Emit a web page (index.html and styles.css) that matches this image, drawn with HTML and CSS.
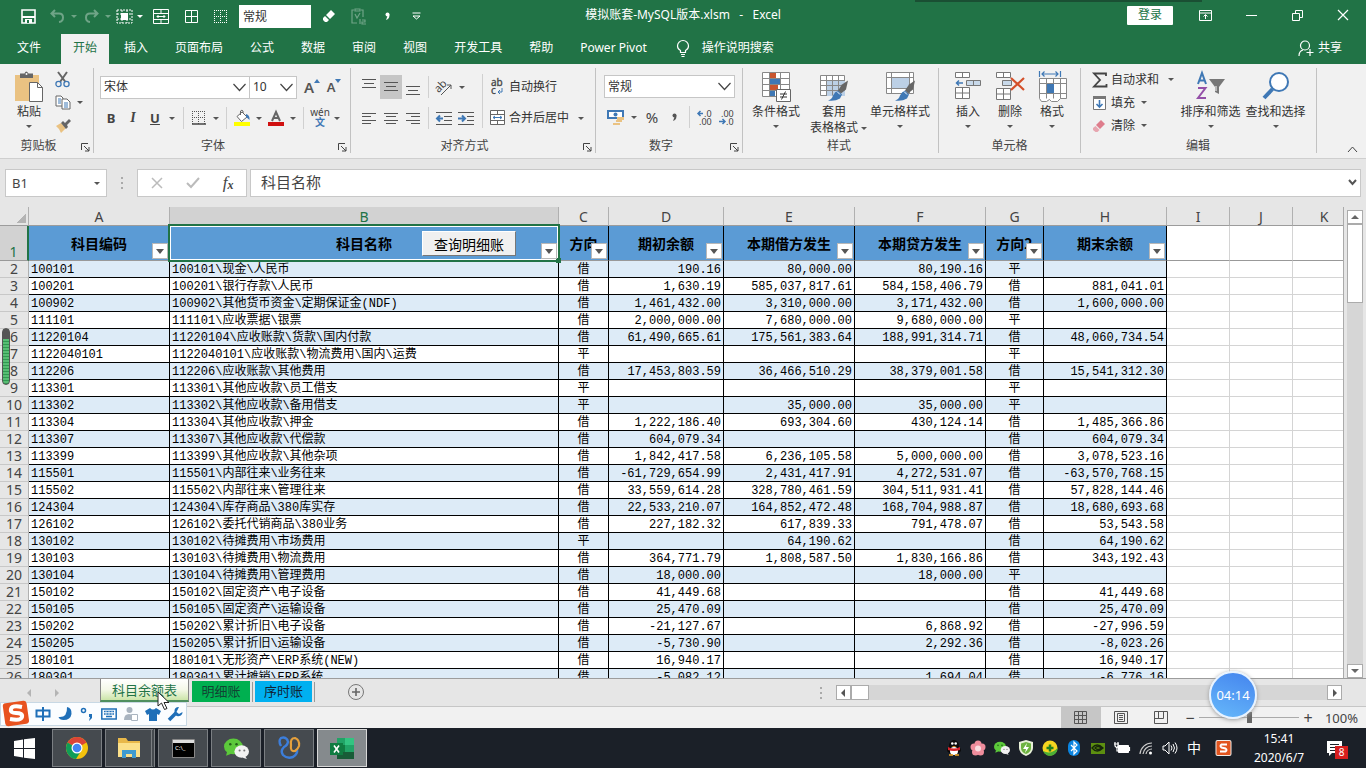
FILE: index.html
```html
<!DOCTYPE html>
<html lang="zh-CN">
<head>
<meta charset="utf-8">
<title>模拟账套-MySQL版本.xlsm - Excel</title>
<link rel="stylesheet" href="styles.css">
</head>
<body>
<svg class="defs" aria-hidden="true">
<symbol id="launch" viewBox="0 0 9 9"><path d="M.5 7V.5H7M3 3l5 5M8 4v4H4" fill="none" stroke="#444"/></symbol>
<symbol id="chev" viewBox="0 0 15 9"><path d="M1.500 1l6 6.500 6-6.500" fill="none" stroke="#444" stroke-width="1.200"/></symbol>
<symbol id="brush" viewBox="0 0 22 22"><path d="M21 1l-2 9-5 4-3-3 4-6z" fill="#666"/><path d="M11 11l4 4-2 4q-5 3-12 2 4-1 5-5 2-4 5-5z" fill="#3f78b5"/><path d="M10 12l3 3" stroke="#fff" stroke-width="1"/></symbol>
<symbol id="wechat" viewBox="0 0 24 20"><ellipse cx="9" cy="8" rx="9" ry="7.500" fill="#5cc93b"/><path d="M3 13l-1 4 5-2z" fill="#5cc93b"/><circle cx="6" cy="6" r="1.200" fill="#24611a"/><circle cx="12" cy="6" r="1.200" fill="#24611a"/><ellipse cx="17" cy="13" rx="7" ry="6" fill="#f2f2f2"/><path d="M20 17l2 3-4-1z" fill="#f2f2f2"/><circle cx="15" cy="12" r="1" fill="#777"/><circle cx="19.500" cy="12" r="1" fill="#777"/></symbol>
</svg>
<div class="app">
<header class="title">
  <div class="qat">
    <button class="q q-save" aria-label="保存"><svg width="15" height="15" viewBox="0 0 15 15"><path d="M1 1h13v13H1z" fill="none" stroke="#fff" stroke-width="1.600"/><path d="M1 7h13v2H1zM4 10h7v4H4z" fill="#fff"/><path d="M6 11h2v3H6z" fill="#217346"/></svg></button>
    <button class="q q-undo dim" aria-label="撤消"><svg width="15" height="14" viewBox="0 0 15 14"><path d="M5 1L1.500 4.500 5 8M2 4.500h7q4 0 4 4t-4 4.500" fill="none" stroke="#fff" stroke-width="2"/></svg></button><i class="car w10 dim"></i>
    <button class="q q-undo dim" aria-label="恢复"><svg width="15" height="14" viewBox="0 0 15 14"><path d="M10 1l3.500 3.500L10 8M13 4.500H6q-4 0-4 4T6 13" fill="none" stroke="#fff" stroke-width="2"/></svg></button><i class="car w10 dim"></i>
    <button class="q q-s" aria-label="选择窗格"><svg width="17" height="15" viewBox="0 0 17 15"><path d="M1 1h15v13H1zM1 5h15M1 10h15M6 1v13M11 1v13" fill="none" stroke="#fff" stroke-dasharray="2 1"/><path d="M5 4h7v7H5z" fill="#fff"/></svg></button><i class="car w10"></i>
    <button class="q q-m" aria-label="合并"><svg width="16" height="15" viewBox="0 0 16 15"><path d="M.5.5h15v14H.5zM.5 4.500h15M.5 10.500h15M8 .5v4M8 10.500v4M4 7.500h8M5.500 6L4 7.500 5.500 9M10.500 6L12 7.500 10.500 9" fill="none" stroke="#fff"/></svg></button>
    <button class="q q-b" aria-label="所有框线"><svg width="13" height="13" viewBox="0 0 13 13"><path d="M.5.5h12v12H.5zM6.500 0v13M0 6.500h13" fill="none" stroke="#fff"/></svg></button>
    <button class="q" aria-label="无框线"><svg width="13" height="13" viewBox="0 0 13 13"><path d="M.5 0v13M6.500 0v13M12.500 0v13M0 .5h13M0 6.500h13M0 12.500h13" fill="none" stroke="#fff" stroke-dasharray="1 1"/></svg></button>
    <input class="qfmt" value="常规" aria-label="数字格式">
    <button class="q" aria-label="清除"><svg width="14" height="14" viewBox="0 0 14 14"><path d="M9 1l4 4-5 5-4-4zM3 7l4 4-2 2H3l-2-2V9z" fill="#fff"/></svg></button>
    <button class="q dim" aria-label="粘贴数值"><svg width="16" height="17" viewBox="0 0 16 17"><path d="M3 2H1v13h5M10 2h2v7M4 1h5v2H4zM4 6l2 4 3-5M9 11v5M11 12h3v2h-3v2h4" fill="none" stroke="#fff" stroke-width="1.200"/></svg></button>
    <button class="q q-c" aria-label="千位分隔"><svg width="5" height="9" viewBox="0 0 5 9"><circle cx="2.500" cy="2.500" r="2" fill="#fff"/><path d="M4.500 2.500Q4.500 7 1 8l1.500-4z" fill="#fff"/></svg></button>
    <button class="q q-m" aria-label="自定义"><svg width="9" height="8" viewBox="0 0 9 8"><path d="M.5 1h8M1 4l3.500 3L8 4z" fill="none" stroke="#fff"/></svg></button>
  </div>
  <div class="name">模拟账套-MySQL版本.xlsm &nbsp;&nbsp;-&nbsp;&nbsp; Excel</div>
  <div class="win">
    <button class="login">登录</button>
    <button class="wb" aria-label="功能区选项"><svg width="13" height="11" viewBox="0 0 13 11"><path d="M.5.5h12v10H.5zM.5 3h12M6.500 9V5M4.500 6.500l2-2 2 2" fill="none" stroke="#fff"/></svg></button>
    <button class="wb" aria-label="最小化"><svg width="11" height="11" viewBox="0 0 11 11"><path d="M0 5.500h11" stroke="#fff"/></svg></button>
    <button class="wb" aria-label="还原"><svg width="11" height="11" viewBox="0 0 11 11"><path d="M.5 3.500h7v7h-7zM3.500 3V.5h7v7H8" fill="none" stroke="#fff"/></svg></button>
    <button class="wb" aria-label="关闭"><svg width="12" height="12" viewBox="0 0 12 12"><path d="M1 1l10 10M11 1L1 11" stroke="#fff" stroke-width="1.200"/></svg></button>
  </div>
  <div class="shade"></div>
</header>
<nav class="tabs">
  <button class="file">文件</button><button class="on">开始</button><button>插入</button><button>页面布局</button><button>公式</button><button>数据</button><button>审阅</button><button>视图</button><button>开发工具</button><button>帮助</button><button>Power Pivot</button>
  <button class="tell"><svg width="14" height="17" viewBox="0 0 14 17"><path d="M4.500 12.500v-2Q1.500 9 1.500 6a5.300 5.300 0 0 1 11 0q0 3-3 4.500v2zM5 14.500h4M5.500 16.500h3" fill="none" stroke="#fff" stroke-width="1.200"/></svg>操作说明搜索</button>
  <button class="share"><svg width="16" height="17" viewBox="0 0 16 17"><circle cx="7" cy="5.500" r="4.500" fill="none" stroke="#fff" stroke-width="1.200"/><path d="M1 16q0-5 4-6M12 9v7M8.500 12.500h7" fill="none" stroke="#fff" stroke-width="1.200"/></svg>共享</button>
</nav>
<section class="ribbon">
  <div class="grp g-clip"><div class="body">
    <button class="big b-paste"><svg width="30" height="31" viewBox="0 0 30 31"><path d="M1 4h24v26H1z" fill="#eac282"/><path d="M6 2.500h4.500q1.500-4 4 0H19V7H6z" fill="#666"/><circle cx="12.500" cy="3" r="1" fill="#fff"/><path d="M15.500 11.500h8l5 5v14h-13z" fill="#fff" stroke="#666"/><path d="M23.500 11.500v5h5" fill="none" stroke="#666"/></svg><span>粘贴</span><i class="car"></i></button>
    <div class="col c3">
      <button aria-label="剪切"><svg width="16" height="16" viewBox="0 0 16 16"><path d="M3 0l7.500 10M12 0L5 10" stroke="#666" stroke-width="2"/><circle cx="3.500" cy="12" r="2.600" fill="none" stroke="#3f78b5" stroke-width="1.300"/><circle cx="11.500" cy="12" r="2.600" fill="none" stroke="#3f78b5" stroke-width="1.300"/></svg></button>
      <button aria-label="复制"><svg width="16" height="15" viewBox="0 0 16 15"><path d="M1 1h5l2 2v8H1z" fill="#fff" stroke="#666"/><path d="M7 4h5l3 3v7H7z" fill="#fff" stroke="#666"/><path d="M3 4h3M3 6h3M3 8h3M9 8h4M9 10h4M9 12h4" stroke="#3f78b5"/></svg><i class="car w18"></i></button>
      <button aria-label="格式刷"><svg width="16" height="15" viewBox="0 0 16 15"><path d="M1 8l5-3 5 5-5 5q-1-4-5-7z" fill="#eac282"/><path d="M6 5l2-2 2 2 4-4 2 2-4 4 1 2-2 2z" fill="#666"/></svg></button>
    </div></div>
    <div class="lab"><span>剪贴板</span><svg class="la"><use href="#launch"/></svg></div>
  </div>
  <div class="grp g-font"><div class="body col c2">
    <div class="row">
      <label class="sel s-font"><select aria-label="字体"><option>宋体</option></select><svg><use href="#chev"/></svg></label><label class="sel s-size"><select aria-label="字号"><option>10</option></select><svg><use href="#chev"/></svg></label>
      <button class="b w24 fa" aria-label="增大字号">A<svg width="6" height="4"><path d="M0 4l3-4 3 4z" fill="#3f78b5"/></svg></button><button class="b w20 fa fs" aria-label="减小字号">A<svg width="6" height="4"><path d="M0 0h6L3 4z" fill="#3f78b5"/></svg></button>
    </div>
    <div class="row">
      <button class="b bb">B</button><button class="b bi">I</button><button class="b bu">U</button><i class="car w12"></i><i class="sep w10"></i>
      <button class="b" aria-label="边框"><svg width="14" height="14" viewBox="0 0 14 14"><path d="M.5 0v13M6.500 0v13M12.500 0v13M0 .5h13M0 6.500h13" fill="none" stroke="#555" stroke-dasharray="1 1"/><path d="M0 13h14" stroke="#444" stroke-width="1.500"/></svg></button><i class="car w12"></i><i class="sep w8"></i>
      <button class="b w24" aria-label="填充颜色"><svg width="17" height="17" viewBox="0 0 17 17"><path d="M3 6.500L8 2l5 5-5.500 4.500z" fill="#fff" stroke="#666"/><path d="M6.500 5V1q1.500-1.500 2.500 0v2" fill="none" stroke="#666"/><path d="M12 4q4 1 3.500 6-2-2-3.500-3z" fill="#3f78b5"/><path d="M0 12h16v4H0z" fill="#ff0"/></svg></button><i class="car w10"></i>
      <button class="b w24" aria-label="字体颜色"><svg width="16" height="17" viewBox="0 0 16 17"><path d="M4 11l4-9 4 9M5.500 8h5" fill="none" stroke="#666" stroke-width="2"/><path d="M0 12h16v4H0z" fill="#d01010"/></svg></button><i class="car w10"></i><i class="sep w10"></i>
      <button class="b w24 wen"><span>wén</span><span class="zi">文</span></button><i class="car w10"></i>
    </div></div>
    <div class="lab"><span>字体</span><svg class="la"><use href="#launch"/></svg></div>
  </div>
  <div class="grp g-align"><div class="body">
    <div class="col c2">
      <div class="row">
        <button class="b" aria-label="顶端对齐"><svg width="14" height="16"><path d="M0 .5h14M2 4.500h10M0 8.500h14" stroke="#555"/></svg></button><button class="b on" aria-label="垂直居中"><svg width="14" height="16"><path d="M0 3.500h14M2 7.500h10M0 11.500h14" stroke="#555"/></svg></button><button class="b" aria-label="底端对齐"><svg width="14" height="16"><path d="M0 7.500h14M2 11.500h10M0 15.500h14" stroke="#555"/></svg></button><i class="sep w8"></i>
        <button class="b w24" aria-label="方向"><svg width="18" height="18" viewBox="0 0 18 18"><text x="0" y="11" transform="rotate(-45 7 9)" font-size="11" fill="#444">ab</text><path d="M6 17L16 7M12 7h4v4" fill="none" stroke="#555"/></svg></button><i class="car w12"></i>
      </div>
      <div class="row">
        <button class="b" aria-label="左对齐"><svg width="14" height="13"><path d="M0 1.500h14M0 4.500h9M0 8.500h14M0 11.500h9" stroke="#555"/></svg></button><button class="b" aria-label="居中"><svg width="14" height="13"><path d="M0 1.500h14M2 4.500h10M0 8.500h14M2 11.500h10" stroke="#555"/></svg></button><button class="b" aria-label="右对齐"><svg width="14" height="13"><path d="M0 1.500h14M5 4.500h9M0 8.500h14M5 11.500h9" stroke="#555"/></svg></button><i class="sep w8"></i>
        <button class="b w24" aria-label="减少缩进"><svg width="16" height="13" viewBox="0 0 16 13"><path d="M0 .5h16M8 4.500h8M8 8.500h8M0 12.500h16" stroke="#555"/><path d="M7 6.500H1M4 3.500l-3 3 3 3" fill="none" stroke="#3f78b5" stroke-width="2"/></svg></button><button class="b w20" aria-label="增加缩进"><svg width="16" height="13" viewBox="0 0 16 13"><path d="M0 .5h16M9 4.500h7M9 8.500h7M0 12.500h16" stroke="#555"/><path d="M0 6.500h6M4 3.500l3 3-3 3" fill="none" stroke="#3f78b5" stroke-width="2"/></svg></button>
      </div>
    </div><i class="sep tall"></i>
    <div class="col c2 wrapcol">
      <button class="txt"><svg width="16" height="16" viewBox="0 0 16 16"><text x="1" y="7" font-size="10" fill="#444" stroke="#444" stroke-width=".3">ab</text><text x="1" y="15" font-size="10" fill="#444" stroke="#444" stroke-width=".3">c</text><path d="M12 9v4H8M10 11l-2 2 2 2" fill="none" stroke="#3f78b5"/></svg>自动换行</button>
      <button class="txt"><svg width="16" height="16" viewBox="0 0 16 16"><path d="M.5.5h14v14H.5zM.5 4.500h14M.5 10.500h14M7.500 .5v4M7.500 10.500v4" fill="#fff" stroke="#666"/><path d="M3 7.500h9M5 6L3 7.500 5 9M10 6l2 1.500L10 9" fill="none" stroke="#3f78b5"/></svg>合并后居中<i class="car w24"></i></button>
    </div></div>
    <div class="lab"><span>对齐方式</span><svg class="la"><use href="#launch"/></svg></div>
  </div>
  <div class="grp g-num"><div class="body col c2">
    <label class="sel s-num"><select aria-label="数字格式"><option>常规</option></select><svg><use href="#chev"/></svg></label>
    <div class="row">
      <button class="b w24" aria-label="会计数字格式"><svg width="18" height="17" viewBox="0 0 18 17"><path d="M1 2h15v7H1z" fill="#fff" stroke="#3f78b5" stroke-width="2"/><circle cx="8.500" cy="5.500" r="2" fill="#3f78b5"/><path d="M10 8h7v3h-7zM9 11h6v2H9zM6 14h7v2H6z" fill="#eac282"/></svg></button><i class="car w12"></i>
      <button class="b w24 pct">%</button><button class="b w20" aria-label="千位分隔样式"><svg width="5" height="9" viewBox="0 0 5 9"><circle cx="2.500" cy="2.500" r="2" fill="#555"/><path d="M4.500 2.500Q4.500 7 1 8l1.500-4z" fill="#555"/></svg></button><i class="sep w10"></i>
      <button class="b w20" aria-label="增加小数位数"><svg width="15" height="15" viewBox="0 0 15 15"><path d="M6 3.500H1M3.500 1L1 3.500 3.500 6" fill="none" stroke="#3f78b5" stroke-width="1.500"/><text x="7" y="7" font-size="9" fill="#444">.0</text><text x="2" y="15" font-size="9" fill="#444">.00</text></svg></button><button class="b w24" aria-label="减少小数位数"><svg width="15" height="15" viewBox="0 0 15 15"><text x="2" y="7" font-size="9" fill="#444">.00</text><path d="M0 11.500h6M3.500 9L6 11.500 3.500 14" fill="none" stroke="#3f78b5" stroke-width="1.500"/><text x="7" y="15" font-size="9" fill="#444">.0</text></svg></button>
    </div></div>
    <div class="lab"><span>数字</span><svg class="la"><use href="#launch"/></svg></div>
  </div>
  <div class="grp g-style"><div class="body">
    <button class="big"><svg width="31" height="31" viewBox="0 0 31 31"><path d="M1.500 1.500h27v24h-27zM1.500 7.500h27M1.500 13.500h27M1.500 19.500h27M8.500 1.500v24M19.500 1.500v24" fill="#fff" stroke="#888"/><path d="M9 2h6v5H9zM9 14h8v5H9z" fill="#c9552f"/><path d="M9 8h10v5H9zM9 20h5v5H9z" fill="#3f78b5"/><path d="M15.500 18.500h14v12h-14z" fill="#fff" stroke="#666"/><path d="M19 23h7M19 26h7M24.500 20.500l-4 8" stroke="#333"/></svg><span>条件格式</span><i class="car"></i></button>
    <button class="big w60"><svg width="30" height="31" viewBox="0 0 30 31"><path d="M1.500 4.500h24v20h-24z" fill="#fff" stroke="#888"/><path d="M8 10h18v15H8z" fill="#bcd0e6"/><path d="M1.500 9.500h24M1.500 14.500h24M1.500 19.500h24M7.500 4.500v20M13.500 4.500v20M19.500 4.500v20" stroke="#888"/><svg x="8" y="8" width="22" height="23"><use href="#brush"/></svg></svg><span>套用</span><span class="nw">表格格式<i class="car w12"></i></span></button>
    <button class="big w68"><svg width="31" height="31" viewBox="0 0 31 31"><path d="M1.500 1.500h27v21h-27z" fill="#fff" stroke="#888"/><path d="M7 6h18v12H7z" fill="#bcd0e6"/><path d="M1.500 6.500h27M1.500 17.500h27M6.500 1.500v21M24.500 1.500v21" stroke="#888"/><svg x="9" y="8" width="22" height="23"><use href="#brush"/></svg></svg><span>单元格样式</span><i class="car"></i></button></div>
    <div class="lab"><span>样式</span></div>
  </div>
  <div class="grp g-cell"><div class="body">
    <button class="big w42"><svg width="28" height="31" viewBox="0 0 28 31"><path d="M1.500 1.500h14v5h-14zM8.500 1.500v5M1.500 16.500h14v11h-14zM1.500 22h14M8.500 16.500v11" fill="#fff" stroke="#777"/><path d="M12.500 9.500h14v5h-14zM19.500 9.500v5" fill="#c8d9ea" stroke="#777"/><path d="M9 12H2.500M5 9.500L2.500 12 5 14.500" fill="none" stroke="#3f78b5" stroke-width="1.500"/></svg><span>插入</span><i class="car"></i></button>
    <button class="big w42"><svg width="30" height="31" viewBox="0 0 30 31"><path d="M1.500 1.500h14v5h-14zM8.500 1.500v5M1.500 17.500h14v11h-14zM1.500 23h14M8.500 17.500v11" fill="#fff" stroke="#777"/><path d="M7.500 9.500h9v5h-9z" fill="#c8d9ea" stroke="#777"/><path d="M16 7l13 12M29 7L16 19" stroke="#d4502a" stroke-width="2.200"/></svg><span>删除</span><i class="car"></i></button>
    <button class="big w42"><svg width="29" height="31" viewBox="0 0 29 31"><path d="M1.500 7.500h27v20h-6l-3 3h-6l-2-2-3 2h-5l-2-3zM1.500 12.500h27M1.500 22.500h27M8.500 7.500v20M15.500 7.500v20M22.500 7.500v20" fill="#fff" stroke="#888"/><path d="M9 13h7v9H9z" fill="#3f78b5"/><path d="M1.500 0v6M22.500 0v6M4 3h16M6.500.5L4 3l2.500 2.500M17.500.5L20 3l-2.500 2.500" fill="none" stroke="#3f78b5" stroke-width="1.200"/></svg><span>格式</span><i class="car"></i></button></div>
    <div class="lab"><span>单元格</span></div>
  </div>
  <div class="grp g-edit"><div class="body">
    <div class="col c3 edit">
      <button class="txt"><svg width="16" height="16" viewBox="0 0 16 16"><path d="M14 4V1.500H2L8 8l-6 6.500h12.500V12" fill="none" stroke="#444" stroke-width="1.800"/></svg>自动求和<i class="car w24"></i></button>
      <button class="txt"><svg width="16" height="16" viewBox="0 0 16 16"><path d="M1.500 1.500h12v13h-12z" fill="#fff" stroke="#777"/><path d="M1 1h13v3H1z" fill="#777"/><path d="M7.500 5v7M4.500 9l3 3 3-3" fill="none" stroke="#3f78b5" stroke-width="1.600"/></svg>填充<i class="car w12"></i></button>
      <button class="txt"><svg width="16" height="16" viewBox="0 0 16 16"><path d="M9 2l4 4-5 5-4-4z" fill="#de7d8c"/><path d="M3.500 8l4 4-2 2h-2L1 12v-2z" fill="#e7a6b0"/></svg>清除<i class="car w12"></i></button>
    </div>
    <button class="big w66"><svg width="30" height="31" viewBox="0 0 30 31"><path d="M2 13L6 2l4 11M3.500 9.500h5" fill="none" stroke="#3f78b5" stroke-width="2"/><path d="M2 17h7.500L2 27h8" fill="none" stroke="#9450a8" stroke-width="2"/><path d="M13 8h16l-6 8v7l-4-2v-5z" fill="#777"/><path d="M20 15v5" stroke="#fff"/></svg><span>排序和筛选</span><i class="car"></i></button>
    <button class="big w66"><svg width="30" height="31" viewBox="0 0 30 31"><circle cx="18" cy="11" r="9" fill="#fff" stroke="#3f78b5" stroke-width="2"/><path d="M11.500 18L3 27" stroke="#3f78b5" stroke-width="4"/></svg><span>查找和选择</span><i class="car"></i></button></div>
    <div class="lab"><span>编辑</span></div>
  </div>
  <button class="fold" aria-label="折叠功能区"><svg width="11" height="7"><path d="M1 6l4.500-5L10 6" fill="none" stroke="#444"/></svg></button>
</section>
<section class="fx">
  <div class="box nb"><input value="B1" aria-label="名称框"><i class="car w20"></i></div>
  <i class="dots"></i>
  <div class="box fb">
    <button aria-label="取消"><svg width="12" height="12"><path d="M1 1l10 10M11 1L1 11" stroke="#bbb" stroke-width="1.500"/></svg></button><button aria-label="输入"><svg width="14" height="12"><path d="M1 6l4 4 8-9" fill="none" stroke="#bbb" stroke-width="2"/></svg></button><button class="fn" aria-label="插入函数">f<small>x</small></button>
  </div>
  <div class="box fi"><input value="科目名称" aria-label="编辑栏"><svg width="9" height="7"><path d="M1 1l3.500 4L8 1" fill="none" stroke="#555" stroke-width="2"/></svg></div>
</section>
<main class="work">
<div class="view">
<table>
<colgroup><col class="k0"><col class="kA"><col class="kB"><col class="kC"><col class="kD"><col class="kE"><col class="kE"><col class="kG"><col class="kH"><col class="kI"><col class="kI"><col class="kI"></colgroup>
<thead>
<tr class="let"><th class="corner"><th>A<th class="cur">B<th>C<th>D<th>E<th>F<th>G<th>H<th>I<th>J<th>K
<tr class="head"><th>1<td>科目编码<button class="flt" aria-label="筛选"></button><td class="seld">科目名称<button class="query">查询明细账</button><button class="flt" aria-label="筛选"></button><i class="ring"></i><td>方向<button class="flt" aria-label="筛选"></button><td>期初余额<button class="flt" aria-label="筛选"></button><td>本期借方发生<button class="flt" aria-label="筛选"></button><td>本期贷方发生<button class="flt" aria-label="筛选"></button><td>方向2<button class="flt" aria-label="筛选"></button><td>期末余额<button class="flt" aria-label="筛选"></button><td><td><td>
</thead>
<tbody>
<tr><th>2<td>100101<td>100101\现金\人民币<td>借<td>190.16<td>80,000.00<td>80,190.16<td>平<td><td><td><td>
<tr><th>3<td>100201<td>100201\银行存款\人民币<td>借<td>1,630.19<td>585,037,817.61<td>584,158,406.79<td>借<td>881,041.01<td><td><td>
<tr><th>4<td>100902<td>100902\其他货币资金\定期保证金(NDF)<td>借<td>1,461,432.00<td>3,310,000.00<td>3,171,432.00<td>借<td>1,600,000.00<td><td><td>
<tr><th>5<td>111101<td>111101\应收票据\银票<td>借<td>2,000,000.00<td>7,680,000.00<td>9,680,000.00<td>平<td><td><td><td>
<tr><th>6<td>11220104<td>11220104\应收账款\货款\国内付款<td>借<td>61,490,665.61<td>175,561,383.64<td>188,991,314.71<td>借<td>48,060,734.54<td><td><td>
<tr><th>7<td>1122040101<td>1122040101\应收账款\物流费用\国内\运费<td>平<td><td><td><td>平<td><td><td><td>
<tr><th>8<td>112206<td>112206\应收账款\其他费用<td>借<td>17,453,803.59<td>36,466,510.29<td>38,379,001.58<td>借<td>15,541,312.30<td><td><td>
<tr><th>9<td>113301<td>113301\其他应收款\员工借支<td>平<td><td><td><td>平<td><td><td><td>
<tr><th>10<td>113302<td>113302\其他应收款\备用借支<td>平<td><td>35,000.00<td>35,000.00<td>平<td><td><td><td>
<tr><th>11<td>113304<td>113304\其他应收款\押金<td>借<td>1,222,186.40<td>693,304.60<td>430,124.14<td>借<td>1,485,366.86<td><td><td>
<tr><th>12<td>113307<td>113307\其他应收款\代偿款<td>借<td>604,079.34<td><td><td>借<td>604,079.34<td><td><td>
<tr><th>13<td>113399<td>113399\其他应收款\其他杂项<td>借<td>1,842,417.58<td>6,236,105.58<td>5,000,000.00<td>借<td>3,078,523.16<td><td><td>
<tr><th>14<td>115501<td>115501\内部往来\业务往来<td>借<td>-61,729,654.99<td>2,431,417.91<td>4,272,531.07<td>借<td>-63,570,768.15<td><td><td>
<tr><th>15<td>115502<td>115502\内部往来\管理往来<td>借<td>33,559,614.28<td>328,780,461.59<td>304,511,931.41<td>借<td>57,828,144.46<td><td><td>
<tr><th>16<td>124304<td>124304\库存商品\380库实存<td>借<td>22,533,210.07<td>164,852,472.48<td>168,704,988.87<td>借<td>18,680,693.68<td><td><td>
<tr><th>17<td>126102<td>126102\委托代销商品\380业务<td>借<td>227,182.32<td>617,839.33<td>791,478.07<td>借<td>53,543.58<td><td><td>
<tr><th>18<td>130102<td>130102\待摊费用\市场费用<td>平<td><td>64,190.62<td><td>借<td>64,190.62<td><td><td>
<tr><th>19<td>130103<td>130103\待摊费用\物流费用<td>借<td>364,771.79<td>1,808,587.50<td>1,830,166.86<td>借<td>343,192.43<td><td><td>
<tr><th>20<td>130104<td>130104\待摊费用\管理费用<td>借<td>18,000.00<td><td>18,000.00<td>平<td><td><td><td>
<tr><th>21<td>150102<td>150102\固定资产\电子设备<td>借<td>41,449.68<td><td><td>借<td>41,449.68<td><td><td>
<tr><th>22<td>150105<td>150105\固定资产\运输设备<td>借<td>25,470.09<td><td><td>借<td>25,470.09<td><td><td>
<tr><th>23<td>150202<td>150202\累计折旧\电子设备<td>借<td>-21,127.67<td><td>6,868.92<td>借<td>-27,996.59<td><td><td>
<tr><th>24<td>150205<td>150205\累计折旧\运输设备<td>借<td>-5,730.90<td><td>2,292.36<td>借<td>-8,023.26<td><td><td>
<tr><th>25<td>180101<td>180101\无形资产\ERP系统(NEW)<td>借<td>16,940.17<td><td><td>借<td>16,940.17<td><td><td>
<tr><th>26<td>180301<td>180301\累计摊销\ERP系统<td>借<td>-5,082.12<td><td>1,694.04<td>借<td>-6,776.16<td><td><td>
</tbody>
</table>
</div>
<div class="vs"><button class="sb" aria-label="向上滚动"><i class="tri up"></i></button><div class="track"><div class="thumb"></div></div><button class="sb" aria-label="向下滚动"><i class="tri down"></i></button></div>
</main>
<section class="sheets">
  <div class="stabs"><button class="nav" aria-label="上一个"><i class="tri left"></i></button><button class="nav" aria-label="下一个"><i class="tri right"></i></button><button class="st on">科目余额表</button><button class="st gr">明细账</button><i class="sdiv"></i><button class="st bl">序时账</button><i class="sdiv"></i><button class="add" aria-label="新工作表"><svg width="16" height="16"><circle cx="8" cy="8" r="7.500" fill="none" stroke="#777"/><path d="M4 8h8M8 4v8" stroke="#666" stroke-width="1.600"/></svg></button></div>
  <div class="hs"><i class="dots"></i><button class="sb" aria-label="向左滚动"><i class="tri left"></i></button><div class="track"><div class="thumb"></div></div><button class="sb" aria-label="向右滚动"><i class="tri right"></i></button></div>
</section>
<footer class="status">
  <button class="vw on" aria-label="普通"><svg width="14" height="13"><path d="M.5.5h12v12H.5zM.5 4.500h12M.5 8.500h12M4.500.5v12M8.500.5v12" fill="none" stroke="#555"/></svg></button>
  <button class="vw" aria-label="页面布局"><svg width="14" height="13"><path d="M.5.5h13v12H.5zM3.500 2.500h7v8h-7zM5 4.500h4M5 6.500h4M5 8.500h4" fill="none" stroke="#555"/></svg></button>
  <button class="vw" aria-label="分页预览"><svg width="14" height="13"><path d="M.5.5h13v12H.5zM.5 7.500h9V.5M4.500.5v7" fill="none" stroke="#555"/></svg></button>
  <button class="zm">−</button><input class="zoom" type="range" min="0" max="200" value="100" aria-label="缩放"><button class="zm">+</button><span class="pc">100%</span>
</footer>
<footer class="task">
  <button class="start" aria-label="开始"><svg width="21" height="21" viewBox="0 0 21 21"><path d="M0 3l9-1.500V10H0zM10 1.300L21 0v10H10zM0 11h9v8.500L0 18zM10 11h11v10l-11-1.300z" fill="#fff"/></svg></button>
  <button class="tb" aria-label="Chrome"><svg width="24" height="24" viewBox="0 0 24 24"><circle cx="12" cy="12" r="11" fill="#f4c20d"/><path d="M12 12L2.500 6.500a11 11 0 0 1 19 0z" fill="#db4437"/><path d="M12 12L2.500 6.500A11 11 0 0 0 11 23l5-8z" fill="#0f9d58"/><circle cx="12" cy="12" r="5.500" fill="#fff"/><circle cx="12" cy="12" r="4.300" fill="#4285f4"/></svg></button>
  <button class="tb stack" aria-label="文件资源管理器"><svg width="24" height="22" viewBox="0 0 24 22"><path d="M1 1h8l2 3h12v16H1z" fill="#e8b84a"/><path d="M1 6h22v14H1z" fill="#fbe08a"/><path d="M5 21v-8h14v8h-4v-4H9v4z" fill="#3f9bd0"/></svg></button>
  <button class="tb" aria-label="命令提示符"><svg width="23" height="19" viewBox="0 0 23 19"><path d="M.5.5h22v18H.5z" fill="#000" stroke="#888"/><path d="M1 1h21v3H1z" fill="#ddd"/><text x="3" y="11" font-size="6" fill="#fff">C:\_</text></svg></button>
  <button class="tb" aria-label="微信"><svg width="25" height="21"><use href="#wechat"/></svg></button>
  <button class="tb" aria-label="Navicat"><svg width="24" height="24" viewBox="0 0 24 24"><path d="M11 5Q9 0 4 2 1 5 4 10" fill="none" stroke="#3c7edb" stroke-width="2.400"/><path d="M11 5q0 4-4 6-4 4-1 8 4 4 10 2 5-3 4-8" fill="none" stroke="#3c7edb" stroke-width="2.400"/><path d="M14 9q-1-7 4-7 5 2 4 8-1 3-4 5-5 1-4-6z" fill="none" stroke="#e5a03c" stroke-width="2.200"/></svg></button>
  <button class="tb on" aria-label="Excel"><svg width="25" height="23" viewBox="0 0 25 23"><path d="M7 1h17v21H7z" fill="#21a366"/><path d="M15 1h9v7h-9z" fill="#33c481"/><path d="M7 8h8v7H7z" fill="#107c41"/><path d="M7 15h17v7H7z" fill="#185c37"/><path d="M0 6h13v12H0z" fill="#107c41"/><path d="M4 8.500l5 7M9 8.500l-5 7" stroke="#fff" stroke-width="1.600"/></svg></button>
  <div class="tray">
    <svg viewBox="0 0 16 16"><ellipse cx="8" cy="6" rx="5" ry="6" fill="#0a0a0a"/><ellipse cx="8" cy="10" rx="7" ry="4" fill="#0a0a0a"/><ellipse cx="8" cy="11" rx="4" ry="4" fill="#fff"/><path d="M2 7q6 3 12 0v3q-6 2-12 0z" fill="#d8232a"/><circle cx="6.300" cy="3.500" r="1.300" fill="#fff"/><circle cx="9.700" cy="3.500" r="1.300" fill="#fff"/><path d="M5.500 6h5L8 7z" fill="#f5a623"/><path d="M3 15h4M9 15h4" stroke="#f5a623" stroke-width="1.500"/></svg>
    <svg viewBox="0 0 16 16"><g fill="#ef8d9c"><circle cx="8" cy="4" r="3.500"/><circle cx="4" cy="7" r="3.500"/><circle cx="12" cy="7" r="3.500"/><circle cx="5.500" cy="12" r="3.500"/><circle cx="10.500" cy="12" r="3.500"/></g><circle cx="8" cy="8.500" r="3" fill="#f9dde0"/></svg>
    <svg><use href="#wechat"/></svg>
    <svg viewBox="0 0 16 16"><path d="M8 0l7 2v6q0 5-7 8-7-3-7-8V2z" fill="#e8f0d8"/><path d="M8 2l5 1.500V8q0 4-5 6-5-2-5-6V3.500z" fill="#6db33f"/><path d="M9 3L5 9h3l-1 4 4-6H8z" fill="#fff"/></svg>
    <svg viewBox="0 0 16 16"><circle cx="8" cy="8" r="7.500" fill="#f6d51f"/><path d="M1 11A7.500 7.500 0 0 0 15.500 8Q9 15 1 11z" fill="#4caf35"/><path d="M8 4.500v7M4.500 8h7" stroke="#208020" stroke-width="2.500"/></svg>
    <svg viewBox="0 0 16 16"><rect x="2" width="12" height="16" rx="6" fill="#0a84e0"/><path d="M5 5l6 6-3 3V2l3 3-6 6" fill="none" stroke="#fff" stroke-width="1.200"/></svg>
    <svg viewBox="0 0 16 16"><path d="M1 3h14v11H1z" fill="#5d8f10"/><path d="M2 8q5-6 11 0-6 6-11 0zM5 8q3-3 6 0-3 3-6 0z" fill="none" stroke="#16260a" stroke-width="1.300"/></svg>
    <svg viewBox="0 0 16 16"><path d="M4.500 5.500h10v7h-10z" fill="#fff" stroke="#fff"/><path d="M0 4h5M1 2v4l2 2v3h2M4 2v4L3 8M15.500 7v4" fill="none" stroke="#fff" stroke-width="1.200"/></svg>
    <svg viewBox="0 0 16 16"><path d="M2 14A12 12 0 0 1 14 3M5 14a9 9 0 0 1 9-8M8 14a6 6 0 0 1 6-5" fill="none" stroke="#ccc" stroke-width="1.200"/><circle cx="12.500" cy="13" r="1.500" fill="#fff"/></svg>
    <svg viewBox="0 0 16 16"><path d="M1 6h2l4-4v12l-4-4H1zM9 5.500q2 2.500 0 5M11 4q3 4 0 8M13 2.500q4 5.500 0 11" fill="none" stroke="#fff"/></svg>
    <span class="zh">中</span>
    <svg class="sg" viewBox="0 0 16 16"><rect width="16" height="16" rx="2" fill="#f1ece8"/><rect x="1" y="1" width="14" height="14" rx="1" fill="#e2551f"/><path d="M11.500 4.500H6q-2 1.500 0 3l4 1q2 1.500 0 3H4.500" fill="none" stroke="#fff" stroke-width="2"/></svg>
  </div>
  <div class="clock"><span>15:41</span><span>2020/6/7</span></div>
  <button class="note" aria-label="通知"><svg width="17" height="17" viewBox="0 0 17 17"><path d="M1 1h15v12H6l-3 3v-3H1z" fill="#fff"/><path d="M4 4.500h9M4 7.500h9M4 10.500h5" stroke="#1c2128"/></svg><span class="badge">8</span></button>
</footer>
</div>
<div class="timer">04:14</div>
<div class="gauge"></div>
<div class="ime">
  <svg class="logo" width="30" height="28" viewBox="0 0 30 28"><rect x="3" y="2" width="24" height="23" rx="3" fill="#e8521f" transform="rotate(-8 15 14)"/><path d="M21 7q-10-2-11 2t5 4q7 0 6 4t-12 2" fill="none" stroke="#fff" stroke-width="4"/></svg>
  <svg viewBox="0 0 16 16"><path d="M1.500 4.500h13v6h-13zM8 1v14" fill="none" stroke="#1f6fb8" stroke-width="2"/></svg>
  <svg viewBox="0 0 16 16"><path d="M10 1q5 1 4.500 7-1 6-8 6-4 0-5-3 9 1 8.500-10z" fill="#1f6fb8"/></svg>
  <svg viewBox="0 0 16 16"><circle cx="4.500" cy="4.500" r="2" fill="none" stroke="#1f6fb8" stroke-width="1.500"/><path d="M10 8h3v4l-3 3 1-4h-1z" fill="#1f6fb8"/></svg>
  <svg viewBox="0 0 16 16"><path d="M.8 3h14.400v10H.8zM3 5.500h10M3 8h10M5 10.500h6" fill="none" stroke="#1f6fb8" stroke-width="1.500"/><path d="M5 5v4M8 5v4M11 5v4" stroke="#fff" stroke-width=".7"/></svg>
  <svg viewBox="0 0 16 16"><circle cx="6.500" cy="4" r="3" fill="#a9b4c0"/><path d="M1 14q0-6 5-6t5 6z" fill="#a9b4c0"/><path d="M8.500 8.500h6v6h-6z" fill="#fff" stroke="#a9b4c0"/></svg>
  <svg viewBox="0 0 16 16"><path d="M5 2q3 3 6 0l5 3-2 4-2-1v7H4V8L2 9 0 5z" fill="#1f6fb8"/></svg>
  <svg viewBox="0 0 16 16"><path d="M2 14l7-7" stroke="#1f6fb8" stroke-width="3.500"/><path d="M12 1q-5 0-4.500 5t5 4q3-1 3-4L12 8 9.500 6z" fill="#1f6fb8"/></svg>
</div>
<svg class="ptr" width="14" height="20" viewBox="0 0 14 20"><path d="M1 1v14l3.500-3 3 6.500 2.500-1-3-6h5z" fill="#fff" stroke="#222"/></svg>
</body>
</html>
```
FILE: styles.css
```css
* { box-sizing: border-box; }
html, body { height: 100%; margin: 0; }
body { overflow: hidden; font: 12px/16px "Noto Sans", "Noto Sans CJK SC", sans-serif; color: #333; }
button, input, select { font: inherit; color: inherit; margin: 0; padding: 0; border: 0; background: none; border-radius: 0; }
button { display: flex; align-items: center; justify-content: center; }
svg { flex: none; display: block; overflow: visible; }
.defs { position: absolute; width: 0; height: 0; }
.app { display: flex; flex-direction: column; height: 100vh; }

/* shared bits */
.car { display: flex; align-items: center; justify-content: center; flex: none; height: 8px; color: #555; }
.car::before { content: ""; border: 3px solid transparent; border-top-color: currentColor; border-bottom: 0; }
.w8 { width: 8px; } .w10 { width: 10px; } .w12 { width: 12px; } .w18 { width: 18px; } .w20 { width: 20px; } .w24 { width: 24px; }
.sep { display: flex; justify-content: center; flex: none; height: 22px; }
.sep::before { content: ""; border-left: 1px solid #d0d0d0; }
.row { display: flex; align-items: center; }
.col { display: flex; flex-direction: column; }
.tri { border: 4px solid transparent; width: 0; height: 0; }
.tri.up { border-bottom-color: #666; border-top: 0; }
.tri.down { border-top-color: #666; border-bottom: 0; }
.tri.left { border-right-color: #555; border-left: 0; }
.tri.right { border-left-color: #555; border-right: 0; }
.dots { width: 2px; height: 12px; background: repeating-linear-gradient(#aaa 0 2px, transparent 2px 5px); }

/* title bar */
.title { position: relative; display: grid; grid-template-columns: 1fr auto 1fr; height: 32px; background: #217346; color: #fff; }
.qat { display: flex; align-items: center; padding-left: 13px; }
.qat .car { color: #fff; }
.q { width: 30px; height: 24px; }
.q-save { margin-right: 2px; }
.qat .dim { opacity: .35; }
.q-undo { width: 24px; }
.q-s { width: 22px; }
.q-m { width: 32px; }
.q-b { width: 28px; }
.q-c { width: 26px; }
.qfmt { width: 72px; height: 23px; padding: 0 4px; margin: 0 3px 0 4px; background: #fff; color: #333; }
.name { display: flex; align-items: center; padding-bottom: 2px; }
.win { display: flex; justify-content: flex-end; align-items: center; padding-bottom: 2px; }
.login { width: 46px; height: 19px; margin-right: 9px; background: #fff; color: #217346; border-radius: 1px; }
.wb { width: 46px; height: 30px; }
.shade { position: absolute; top: 0; left: 67%; right: 12%; height: 2px; background: #1a4f33; }

/* tabs */
.tabs { display: flex; align-items: flex-end; gap: 3px; height: 32px; padding-left: 5px; background: #217346; color: #fff; }
.tabs button { height: 30px; padding: 0 12px 2px; white-space: nowrap; }
.tabs .file { margin-right: 5px; }
.tabs .on { background: #f1f1f1; color: #217346; }
.tabs .tell { gap: 12px; padding-left: 14px; }
.tabs .share { margin-left: auto; padding-right: 24px; gap: 4px; }

/* ribbon */
.ribbon { display: flex; position: relative; height: 95px; padding: 4px 0 5px; background: #f1f1f1; border-bottom: 1px solid #cfcfcf; }
.grp { display: flex; flex-direction: column; justify-content: space-between; border-right: 1px solid #c2c2c2; }
.body { display: flex; height: 70px; }
.lab { display: flex; align-items: center; height: 15px; color: #444; }
.lab span { flex: 1; text-align: center; padding-right: 12px; }
.la { width: 9px; height: 9px; margin: 3px 3px 0 0; }
.g-clip { width: 94px; } .g-clip .lab span { padding-right: 4px; }
.g-font { width: 257px; padding-left: 6px; }
.g-align { width: 245px; padding-left: 7px; }
.g-num { width: 147px; padding-left: 8px; }
.g-style { width: 196px; padding-left: 5px; }
.g-cell { width: 142px; padding-left: 8px; }
.g-edit { width: 236px; padding-left: 11px; }
.g-style .lab span, .g-cell .lab span { padding-right: 8px; }
.big { flex-direction: column; justify-content: flex-start; width: 56px; padding-top: 3px; color: #333; white-space: nowrap; }
.big span { margin-top: 2px; line-height: 16px; }
.big .car { margin-top: 2px; }
.big .nw { display: flex; align-items: center; margin: 0 -12px 0 0; }
.big .nw .car { margin-top: 0; }
.b-paste { width: 44px; margin: 0 4px 0 7px; }
.big.w60 { width: 60px; }
.big.w68 { width: 68px; margin-left: 2px; }
.big.w42 { width: 42px; }
.big.w66 { width: 65px; }
.c3 button { height: 23px; }
.c3:not(.edit) button { justify-content: flex-start; }
.c2 { justify-content: flex-start; gap: 7px; padding-top: 7px; }
.c2 > * { height: 24px; }
.b { width: 22px; height: 24px; color: #444; }
.b.w24 { width: 24px; } .b.w20 { width: 20px; }
.b.on { background: #c6c6c6; }
.bb { font-weight: 700; font-size: 13px; }
.bi { font: italic 700 14px "Liberation Serif", serif; }
.bu { font-weight: 700; font-size: 13px; text-decoration: underline; }
.fa { font-size: 15px; font-weight: 600; align-items: flex-start; padding-top: 4px; color: #555; }
.b.fs { font-size: 13px; }
.wen { flex-direction: column; font-size: 10px; line-height: 9px; }
.wen .zi { color: #3f78b5; font-weight: 700; font-size: 10px; line-height: 11px; }
.pct { font-size: 15px; }
.sel { display: grid; align-items: center; background: #fff; border: 1px solid #c6c6c6; height: 23px; }
.sel select, .sel svg { grid-area: 1 / 1; }
.sel select { appearance: none; width: 100%; height: 20px; padding-left: 3px; outline: 0; }
.sel svg { justify-self: end; width: 15px; height: 9px; margin-right: 2px; pointer-events: none; }
.s-font { width: 150px; }
.s-size { width: 48px; margin-left: -1px; margin-right: 3px; }
.s-num { width: 131px; }
.sep.tall { height: 54px; width: 9px; margin-top: 6px; }
.g-align .row { width: 120px; }
.wrapcol { padding-left: 3px; }
.txt { justify-content: flex-start; gap: 3px; white-space: nowrap; color: #333; }
.txt .w24 { margin-left: -3px; }
.edit { width: 86px; }
.fold { margin: auto 8px 0 auto; }

/* formula bar */
.fx { display: flex; height: 48px; padding: 10px 5px; align-items: center; background: #e6e6e6; }
.box { display: flex; align-items: center; height: 28px; background: #fff; border: 1px solid #c8c8c8; color: #444; }
.nb { width: 102px; padding-left: 6px; }
.nb input { width: 75px; font-size: 13px; }
.fx > .dots { margin: 0 14px; }
.fb { width: 110px; padding-left: 1px; }
.fb button { width: 36px; }
.fb .fn { font: italic 17px "Liberation Serif", serif; color: #444; }
.fn small { font-size: 12px; padding-top: 4px; font-weight: 700; }
.fi { flex: 1; margin-left: 3px; padding: 0 3px 2px 10px; }
.fi input { flex: 1; font-size: 15px; outline: 0; }

/* grid */
.work { flex: 1; min-height: 0; display: flex; background: #e6e6e6; }
.view { flex: 1; min-width: 0; overflow: hidden; background: #fff; border-right: 1px solid #aaa; }
table { table-layout: fixed; width: 1356px; border-spacing: 0; border-collapse: separate; }
.k0 { width: 29px; } .kA { width: 141px; } .kB { width: 389px; } .kC { width: 50px; } .kD { width: 115px; } .kE { width: 131px; } .kG { width: 58px; } .kH { width: 123px; } .kI { width: 63px; }
th, td { padding: 0; white-space: nowrap; }
th { font-weight: 400; font-size: 14px; line-height: 16px; color: #444; background: #e6e6e6; border-right: 1px solid #b0b0b0; border-bottom: 1px solid #c8c8c8; }
td { height: 17px; line-height: 14px; padding: 2px 2px 0 2px; font-family: "Liberation Mono", "Noto Sans CJK SC", monospace; color: #000; border-right: 1px solid #000; border-bottom: 1px solid #000; text-align: right; }
tbody tr:nth-child(odd) td { background: #ddebf7; }
td:nth-child(2), td:nth-child(3) { text-align: left; }
td:nth-child(4), td:nth-child(8) { text-align: center; }
tr td:nth-child(n+10), tbody tr:nth-child(odd) td:nth-child(n+10) { background: #fff; border-color: #d4d4d4; }
.let th { height: 19px; line-height: 16px; padding-top: 2px; border-bottom-color: #9c9c9c; }
.let .corner { background: linear-gradient(135deg, #e6e6e6 62%, #b4b4b4 62%); background-size: 14px 12px; background-repeat: no-repeat; background-position: 12px 4px; background-color: #e6e6e6; }
.let .cur { background: #d2d2d2; color: #217346; }
.head th { background: #d2d2d2; color: #217346; vertical-align: bottom; border-right: 2px solid #217346; border-bottom-color: #999; }
.head td, .head td:nth-child(n) { position: relative; height: 35px; padding: 0 2px; font-size: 14px; font-weight: 700; font-family: "Noto Sans CJK SC", sans-serif; text-align: center; background: #5b9bd5; border-bottom-color: #999; }
.head td:nth-child(n+10) { background: #fff; }
.flt { position: absolute; right: 1px; bottom: 1px; width: 16px; height: 16px; background: #fff; border: 1px solid #b8b8b8; }
.flt::before { content: ""; border: 4px solid transparent; border-top: 5px solid #555; border-bottom: 0; }
.query { position: absolute; z-index: 2; left: 252px; top: 5px; width: 94px; height: 25px; font-size: 14px; font-weight: 400; background: #f0f0f0; border: 1px solid #fff; border-right-color: #777; border-bottom-color: #777; }
.ring { position: absolute; z-index: 1; inset: -2px -2px -2px -2px; border: 2px solid #217346; box-shadow: inset 0 0 0 1px #fff; pointer-events: none; }
.ring::after { content: ""; position: absolute; right: -3px; bottom: -3px; width: 5px; height: 5px; background: #217346; }
.seld .flt { z-index: 2; }
.vs { display: flex; flex-direction: column; width: 16px; margin: 3px 3px 0; }
.sb { flex: none; background: #fff; border: 1px solid #ababab; }
.vs .sb { width: 16px; height: 14px; }
.track { flex: 1; background: #d6d6d6; }
.thumb { background: #fff; border: 1px solid #ababab; }
.vs .thumb { height: 79px; }

/* sheet tabs */
.sheets { display: flex; height: 29px; background: #e6e6e6; border-top: 1px solid #9c9c9c; border-bottom: 1px solid #c6c6c6; }
.stabs { flex: 1; display: flex; align-items: flex-start; font-size: 13px; padding-left: 15px; }
.nav { width: 28px; height: 27px; opacity: .35; }
.st { height: 21px; margin-top: 2px; padding-bottom: 2px; }
.st.on { width: 89px; height: 23px; margin: 0 3px 0 29px; color: #217346; background: linear-gradient(#fff, #f4f8e8 50%, #cbe5a8); border: 1px solid #888; border-top: 0; border-bottom: 2px solid #4f8f5f; padding-bottom: 0; }
.gr { width: 58px; background: #00b050; color: #143; }
.bl { width: 57px; background: #00b0f0; color: #123; }
.sdiv { width: 1px; height: 20px; margin: 3px 2px 0; background: #999; }
.add { margin: 5px 0 0 31px; }
.hs { flex: 0 0 40%; display: flex; align-items: center; padding-right: 24px; }
.hs .dots { margin-right: 14px; }
.hs .sb { width: 15px; height: 15px; }
.hs .track { height: 15px; }
.hs .thumb { width: 18px; height: 15px; }

/* status bar */
.status { display: flex; align-items: center; justify-content: flex-end; height: 21px; background: #f1f1f1; padding-right: 8px; }
.vw { width: 40px; height: 21px; }
.vw.on { background: #c6c6c6; }
.zm { width: 18px; font-size: 16px; color: #444; }
.zoom { appearance: none; width: 100px; height: 12px; background: linear-gradient(#aaa, #aaa) center / 100% 1px no-repeat; }
.zoom::-webkit-slider-thumb { appearance: none; width: 5px; height: 11px; background: #666; }
.pc { width: 41px; font-size: 13px; text-align: right; color: #444; }

/* taskbar */
.task { display: flex; align-items: center; height: 40px; background: #1b2028; color: #fff; }
.start { width: 48px; height: 40px; margin-right: 4px; }
.tb { width: 50px; height: 38px; margin-right: 3px; background: #454a4f; border: 1px solid #7b7f83; }
.tb.stack { border-right: 4px double #7b7f83; }
.tb.on { background: #858a8d; border-color: #d8d8d8; }
.tray { display: flex; align-items: center; gap: 8px; margin-left: auto; }
.tray svg { width: 16px; height: 16px; }
.tray .sg { margin-left: 5px; width: 17px; }
.zh { width: 16px; font-size: 14px; text-align: center; }
.clock { display: flex; flex-direction: column; width: 94px; text-align: center; font-size: 12px; line-height: 19px; }
.note { position: relative; margin-right: 23px; }
.badge { position: absolute; left: 9px; top: 6px; width: 13px; height: 13px; font-size: 10px; line-height: 13px; background: #d81e1e; text-align: center; }

/* floating windows */
.timer { position: absolute; right: 109px; bottom: 49px; width: 48px; height: 48px; border: 2px solid #e8f3ff; border-radius: 50%; background: linear-gradient(20deg, #66b8fa, #4484ee); box-shadow: 0 1px 4px #999; color: #fff; font-size: 13px; line-height: 44px; text-align: center; }
.gauge { position: absolute; left: 2px; top: 328px; width: 8px; height: 57px; border-radius: 4px; background: linear-gradient(#555 10px, transparent 10px), repeating-linear-gradient(#2f9a50 0 1px, #58bd74 1px 3px); border: 1px solid #555; }
.ime { position: absolute; left: 0; bottom: 42px; display: flex; align-items: center; gap: 6px; width: 187px; height: 24px; background: #fbfdff; border: 1px solid #c8d8e4; }
.ime svg { width: 16px; height: 16px; }
.ime .logo { width: 30px; height: 28px; margin-right: -2px; }
.ptr { position: absolute; left: 157px; bottom: 57px; }
```
